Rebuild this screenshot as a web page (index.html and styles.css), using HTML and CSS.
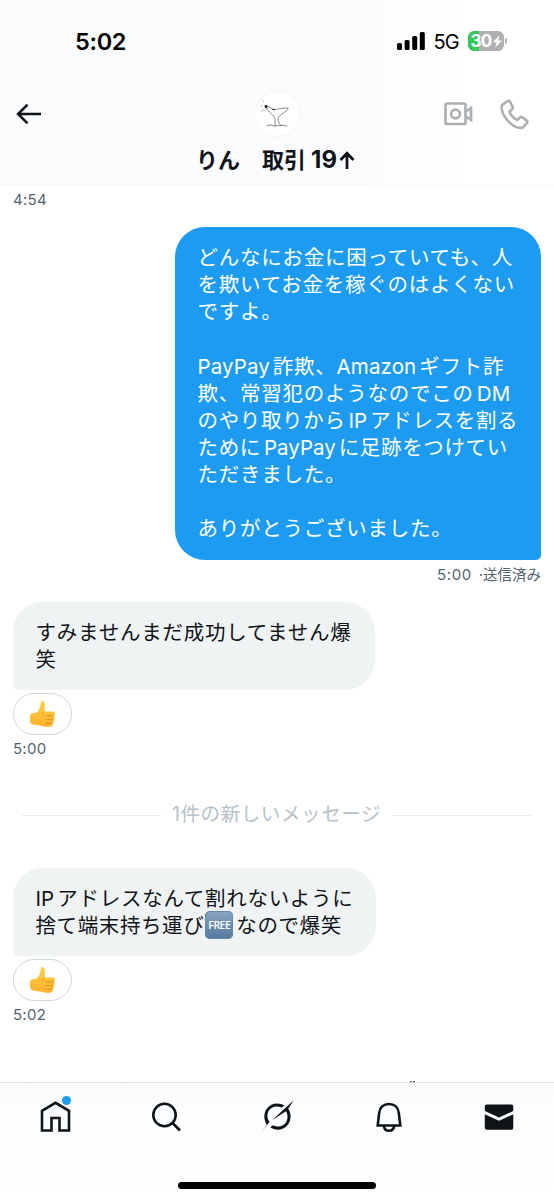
FILE: index.html
```html
<!DOCTYPE html>
<html lang="ja">
<head>
<meta charset="utf-8">
<meta name="viewport" content="width=device-width">
<title>りん</title>
<link rel="stylesheet" href="styles.css">
</head>
<body>
<div class="phone">
  <header class="header">
    <div class="status">
      <span class="clock">5:02</span>
      <div class="status-right">
        <svg class="signal" viewBox="0 0 28 18"><rect x="0" y="11" width="5" height="7" rx="1.6"/><rect x="7.6" y="8" width="5" height="10" rx="1.6"/><rect x="15.2" y="4" width="5" height="14" rx="1.6"/><rect x="22.8" y="0" width="5" height="18" rx="1.6"/></svg>
        <span class="network">5G</span>
        <div class="battery">
          <span class="battery-level">30</span>
          <svg class="bolt" viewBox="0 0 9 12"><path d="M6.4 0 0 6.8h3.6L2.3 12 9 5H5.2z"/></svg>
        </div>
        <span class="battery-tip"></span>
      </div>
    </div>
    <div class="nav">
      <svg class="back" viewBox="0 0 26 22"><path d="M25 11H2.3M11.5 1.6 2.1 11l9.4 9.4"/></svg>
      <div class="avatar">
        <svg viewBox="0 0 44 44"><path d="M11 14.500C14 14.500 16 15.500 18 18 22 18.500 26 16 34 16.500 33 21 25 22 23.500 27 23 30 25.500 33 27 35M12 16C13 21 20 23 20.500 28V35M12 35C15 33 18 33.500 20 35 24 34 29 33.500 33 35"/><path d="m8 9 1 1M6 14h1.500M7 20l2-2"/><path class="ink" d="m10 13 3 1-1 3-2-1zM17 17.200h3v2z"/></svg>
      </div>
      <div class="actions">
        <svg class="video" viewBox="0 0 29 24"><rect x="1.500" y="1.500" width="20" height="20.500" rx="1.500"/><circle cx="11.500" cy="12" r="4.400"/><path d="M22 9.500 27 6v12l-5-3.500"/></svg>
        <svg class="call" viewBox="0 0 30 31"><path d="M8.800 2 2.900 6.100C1.100 15.900 13.800 30.600 23.700 28.700L28 23.800c.5-.7.400-1.600-.3-2.200l-4.500-3.400c-.7-.5-1.500-.5-2.100.1l-2.700 2.700c-3.500-1.600-6.600-4.900-8-8.300l3-2.600c.7-.6.800-1.500.3-2.200l-2.800-5.400C10.400 1.700 9.600 1.400 8.800 2z"/></svg>
      </div>
    </div>
    <h1 class="title"><span class="name">りん</span><span class="deal">取引</span><span class="count">19</span><svg class="up" viewBox="0 0 16 19"><path d="M8 18V2.500M1.500 9 8 2.200 14.500 9"/></svg></h1>
  </header>

  <main class="thread">
    <p class="time first">4:54</p>
    <div class="bubble sent">
      <p>どんなにお金に困っていても、人</p>
      <p>を欺いてお金を稼ぐのはよくない</p>
      <p>ですよ。</p>
      <p class="blank"></p>
      <p><span class="latin start">PayPay</span>詐欺、<span class="latin amazon">Amazon</span>ギフト詐</p>
      <p>欺、常習犯のようなのでこの<span class="latin">DM</span></p>
      <p class="snug">のやり取りから<span class="latin">IP</span>アドレスを割る</p>
      <p class="snug">ために<span class="latin">PayPay</span>に足跡をつけてい</p>
      <p>ただきました。</p>
      <p class="blank"></p>
      <p>ありがとうございました。</p>
    </div>
    <p class="time delivered"><span>5:00</span><span class="state">·送信済み</span></p>

    <div class="bubble received">
      <p>すみませんまだ成功してません爆</p>
      <p>笑</p>
    </div>
    <div class="reaction"><svg viewBox="0 0 28 30"><use href="#thumb"/></svg></div>
    <p class="time">5:00</p>

    <div class="divider"><span><b>1</b>件の新しいメッセージ</span></div>

    <div class="bubble received latest">
      <p><span class="latin start">IP</span>アドレスなんて割れないように</p>
      <p class="tight">捨て端末持ち運び<span class="free">FREE</span>なので爆笑</p>
    </div>
    <div class="reaction"><svg viewBox="0 0 28 30"><use href="#thumb"/></svg></div>
    <p class="time">5:02</p>
  </main>

  <footer class="tabs">
    <svg class="peek" viewBox="0 0 554 2"><path d="M25 1.500h4M44 1.500h3M63 1.500h4M119 1.500h6M146 1.500h3M228 1.500h3M258 1.500h3M500 1.500h3M539 1.500h3"/><path class="strong" d="M410 .8h2M413 .6h2"/></svg>
    <div class="tab-row">
      <span class="tab"><svg viewBox="0 0 36 36"><path d="M5 11.800 18.500 3.800 32 11.800V31.500H22.500V19H14.500V31.500H5z"/></svg><i class="dot"></i></span>
      <span class="tab"><svg viewBox="0 0 36 36"><circle cx="16.500" cy="16" r="11.200"/><path d="m24.500 24 7.500 7.500"/></svg></span>
      <span class="tab"><svg class="solid" viewBox="0 0 36 36"><path d="M7.800 25.700C4.700 20.800 4.400 14.500 7.700 9.800 12 3.900 20 3 25.500 6.700L22.500 8.500C17.800 6.400 12.800 7.500 10.100 11.300 7.600 15 8 19.500 10.500 22.900L1.500 34z"/><path d="M13 21.200 34.800 1.200 29.300 9.500C32.500 14.500 32.300 21.400 28.700 26 24.500 31.300 16.700 32.300 11.200 28.300L14 26.200C18.400 28.600 23.500 27.800 26.500 24 28.900 20.900 29.200 16.300 27 12.300z"/></svg></span>
      <span class="tab"><svg class="bell" viewBox="0 0 36 36"><path d="M6.700 26.500 8.200 13.800C8.900 8.200 12.800 5 18 5s9.100 3.200 9.800 8.800L29.300 26.500zM12.800 27c.5 3 2.500 4.800 5.200 4.800s4.700-1.800 5.200-4.800"/></svg></span>
      <span class="tab"><svg class="solid" viewBox="0 0 36 36"><path d="M3.800 12V7.500q0-2 2-2h24.500q2 0 2 2V12L18 18.500zM3.800 15.300 18 21.800l14.300-6.500v13.400q0 2-2 2H5.800q-2 0-2-2z"/></svg></span>
    </div>
    <div class="home-bar"></div>
  </footer>
</div>

<svg class="defs" width="0" height="0">
  <defs>
    <linearGradient id="skin" x1="0" y1="0" x2="0" y2="1"><stop offset="0" stop-color="#ffd047"/><stop offset="1" stop-color="#fbb22c"/></linearGradient>
    <g id="thumb">
      <path fill="url(#skin)" d="M12.300 2.200c.4-1.700 3.900-1.500 4.200 1.800.3 3-.5 5.500-.3 8.200h8.500c3.200.1 3.400 3.700 1.300 4.500 1.700 1.100 1.200 3.700-.3 4.300 1.200 1.200.6 3.500-.9 4 .7 1.900-.4 3.400-2.500 3.600-3.700.3-7.500.1-10.500-1.200-2.700-1-6.300-.6-9.300-1.500C-.2 23.500.2 18.300 1.500 14.800c2.500-1.200 5.700-.7 7.500-2.500 2.700-2.800 2.800-7.300 3.300-10.100z"/>
      <path fill="none" stroke="#df8d16" stroke-width=".9" stroke-linecap="round" d="M17.500 16.800h8M17.300 21h7.800M17.500 25h6.700M16.300 12.500c-2.500.8-2.800 3-1 4"/>
    </g>
  </defs>
</svg>
</body>
</html>
```

FILE: styles.css
```css
* { box-sizing: border-box; }
body { margin: 0; background: #fff; font-family: Inter, "Noto Sans CJK JP", sans-serif; color: #0f1419; }
p, h1 { margin: 0; }
svg { display: block; fill: none; stroke: currentColor; overflow: visible; }
.defs { position: absolute; }
.phone { width: 554px; height: 1200px; display: flex; flex-direction: column; overflow: hidden; }

.header { height: 186px; flex: none; background: linear-gradient(90deg, #fbfcfe, #fbfbfe 60%, #fff 85%); border-bottom: 1px solid #f5f6f8; }
.status { height: 82px; display: flex; justify-content: space-between; padding: 0 47px 0 75px; align-items: center; }
.clock { font-size: 23.5px; font-weight: 600; line-height: 30px; color: #000; letter-spacing: -.3px; padding-top: 1px; }
.status-right { display: flex; align-items: center; }
.signal { width: 28px; height: 18px; fill: #000; stroke: none; }
.network { font-size: 20px; line-height: 24px; margin: 1px 9px 0 9px; color: #000; letter-spacing: -.8px; font-weight: 400; }
.battery { width: 36px; height: 20px; border-radius: 6px; background: linear-gradient(90deg, #34c759 31%, #b1b1b1 31%); color: #fff; display: flex; align-items: center; justify-content: center; gap: 1px; }
.battery-level { font-size: 17px; font-weight: 700; line-height: 20px; letter-spacing: -.6px; }
.bolt { width: 9px; height: 13px; fill: #fff; stroke: none; }
.battery-tip { width: 2px; height: 6px; margin-left: 1px; background: #b1b1b1; border-radius: 0 2px 2px 0; }
.nav { height: 64px; display: grid; grid-template-columns: 1fr 46px 1fr; align-items: center; padding: 0 25px 0 16px; }
.back { width: 26px; height: 22px; stroke-width: 2.600; }
.avatar { width: 46px; height: 46px; border: 1.500px solid #f3f4f6; border-radius: 50%; background: #fff; margin-left: 4px; }
.avatar svg { width: 43px; height: 43px; stroke: #666; stroke-width: .8; }
.avatar .ink { fill: #222; stroke: none; }
.actions { display: flex; justify-content: flex-end; align-items: center; gap: 26px; color: #adb0b3; }
.video { width: 29px; height: 24px; stroke-width: 2.700; }
.call { width: 30px; height: 31px; stroke-width: 2.600; stroke-linejoin: round; }
.title { display: flex; align-items: center; padding-left: 196px; height: 28px; font-size: 22px; line-height: 28px; font-weight: 700; white-space: nowrap; }
.name { width: 66px; }
.deal { width: 49px; }
.count { font-size: 24px; letter-spacing: .2px; }
.up { width: 16px; height: 19px; stroke-width: 2.800; margin-left: 2px; }

.thread { flex: 1; display: flex; flex-direction: column; align-items: flex-start; padding: 0 13px; min-height: 0; }
.time { font-size: 15px; line-height: 20px; color: #536471; letter-spacing: .25px; margin-top: 4px; }
.first { margin: 4px 0 17px; }
.bubble { padding: 17px 0 17px 22.500px; font-size: 20.500px; line-height: 27.150px; letter-spacing: .75px; white-space: nowrap; flex: none; }
.bubble p { height: 27.150px; }
.bubble .snug { letter-spacing: .65px; }
.bubble .tight { letter-spacing: .6px; }
.latin { letter-spacing: .1px; margin: 0 3px 0 3px; }
.snug .latin { letter-spacing: 0; }
.latin.start { margin-left: 0; }
.latin.amazon { margin-left: 0; }
.sent { align-self: flex-end; width: 366px; height: 333px; background: #1d9bf0; color: #fff; border-radius: 30px 30px 5px 30px; }
.received { width: 362px; height: 88px; background: #eff3f4; border-radius: 30px 30px 30px 5px; }
.latest { width: 363px; }
.delivered { align-self: flex-end; display: flex; gap: 7px; margin: 5px 0 16.500px; }
.delivered span:first-child { letter-spacing: .6px; }
.state { font-size: 14.500px; letter-spacing: 0; }
.reaction { width: 59px; height: 42px; margin-top: 3.500px; border: 1.500px solid #cfd9de; border-radius: 21px; display: flex; align-items: center; justify-content: center; flex: none; }
.reaction svg { width: 27px; height: 28px; stroke: none; }
.divider { align-self: stretch; display: flex; align-items: center; gap: 11px; margin: 43px 10px 39.500px 9px; height: 26px; color: #b5c2ca; font-size: 19.500px; letter-spacing: .6px; }
.divider span { line-height: 26px; padding-bottom: 2px; }
.divider b { font-weight: 400; }
.divider::before, .divider::after { content: ""; flex: 1; height: 1px; background: #e9eced; margin-top: 1px; }
.free { display: inline-flex; width: 28px; height: 28px; margin: -6px 3px -6px 1px; align-items: center; justify-content: center; vertical-align: 4px; border-radius: 5px; background: linear-gradient(#88a5c2, #55789c); box-shadow: inset 0 0 0 1px #6587a8; color: #fff; font: 600 10.500px/1 "Open Sans", sans-serif; letter-spacing: -.5px; }

.tabs { position: relative; height: 118px; flex: none; border-top: 1px solid #e4e7ea; background: linear-gradient(#fbfcfe, #fff); }
.peek { position: absolute; left: 0; top: -2px; width: 554px; height: 2px; stroke: #d5d8dc; stroke-width: 1; }
.peek .strong { stroke: #33383c; }
.tab-row { display: grid; grid-template-columns: repeat(5, 1fr); height: 68px; }
.tab { position: relative; display: flex; align-items: center; justify-content: center; }
.tab svg { width: 36px; height: 36px; stroke-width: 2.600; }
.tab .bell { margin-left: 3px; }
.tab .solid { fill: #0f1419; stroke: none; }
.dot { position: absolute; left: 62px; top: 13px; width: 9px; height: 9px; border-radius: 50%; background: #1d9bf0; }
.home-bar { width: 198px; height: 7px; border-radius: 4px; background: #000; margin: 31px auto 0; }
```
